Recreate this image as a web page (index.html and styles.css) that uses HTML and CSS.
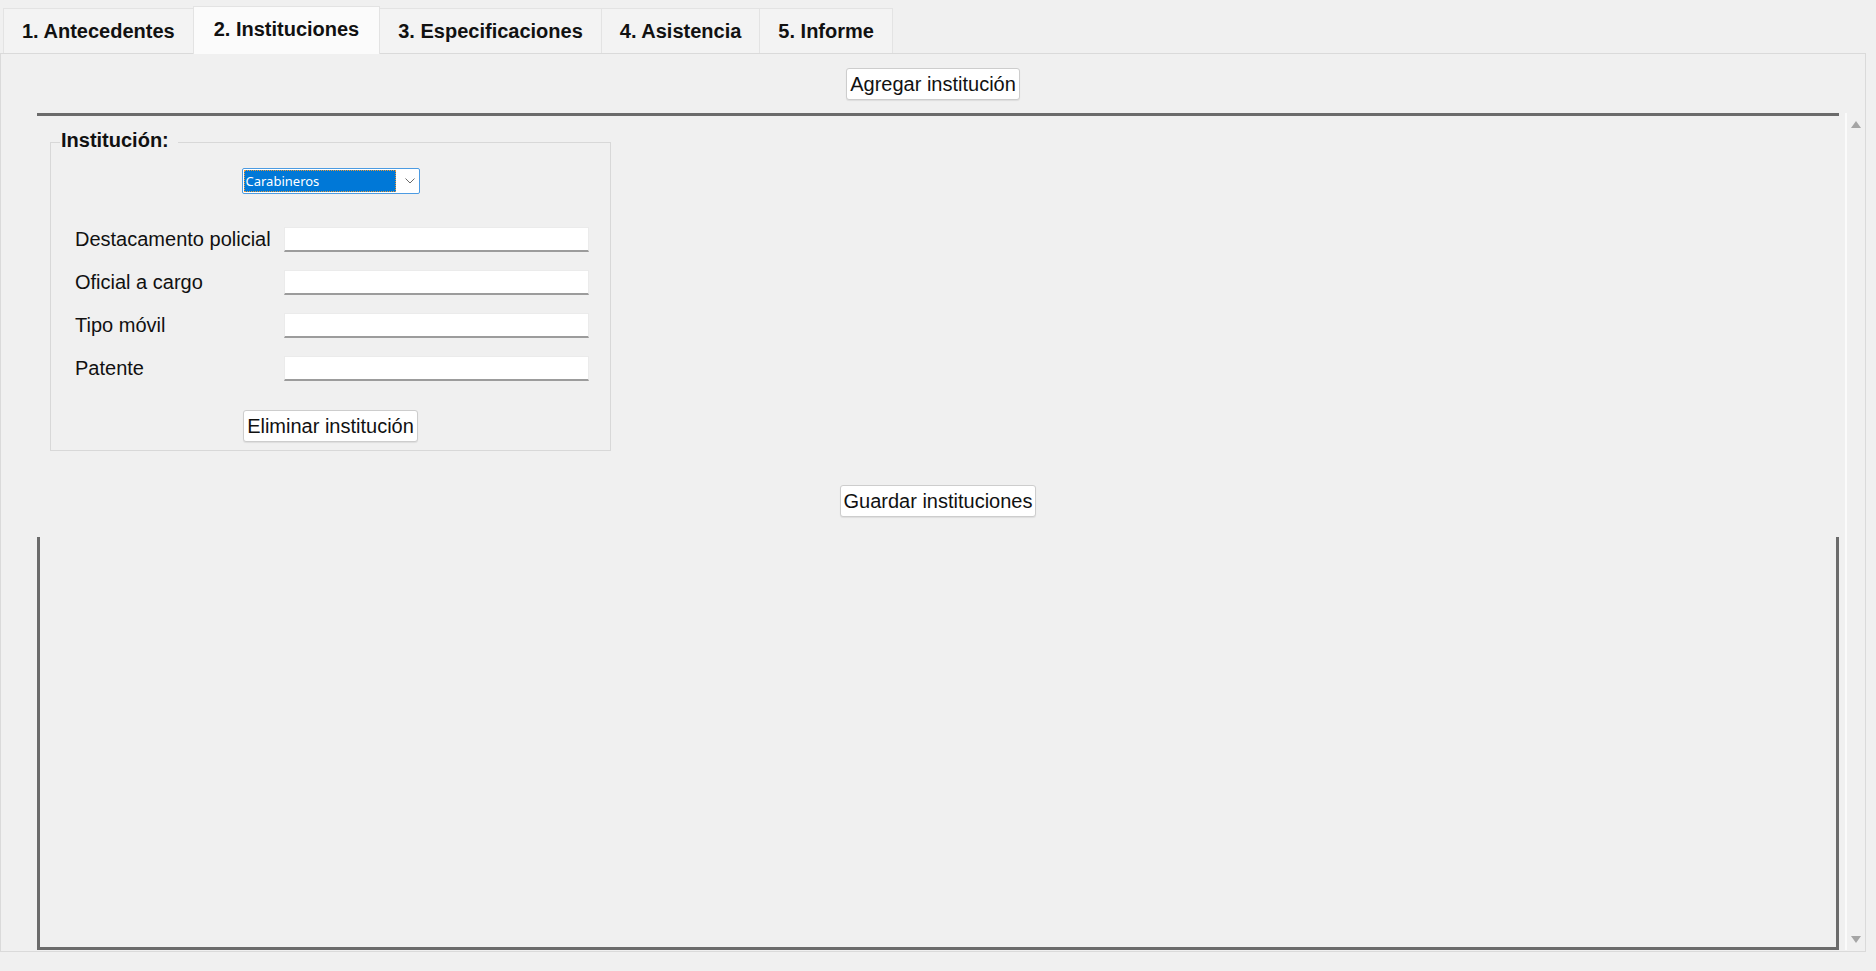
FILE: index.html
```html
<!DOCTYPE html>
<html>
<head>
	<meta charset="UTF-8">
	<title>Instituciones</title>

	<link rel="stylesheet" href="styles.css">
</head>

<body>
	<div id="tabs">
		<div class="tab">1. Antecedentes</div>
		<div class="tab active">2. Instituciones</div>
		<div class="tab">3. Especificaciones</div>
		<div class="tab">4. Asistencia</div>
		<div class="tab">5. Informe</div>
	</div>

	<div id="panel">
		<div class="top_row">
			<button class="btn" type="button">Agregar institución</button>
		</div>

		<div id="scroll_pane">
			<div id="viewport">
				<div id="content">
					<fieldset class="institucion">
						<legend>Institución:</legend>
						<div class="combo_row">
							<div class="combo">
								<span class="combo_value">Carabineros</span>
								<svg class="chevron" width="10" height="6" viewBox="0 0 10 6"><path d="M0.5 0.5 L5 5 L9.5 0.5" fill="none" stroke="#6a6a6a" stroke-width="1"/></svg>
							</div>
						</div>
						<div class="form_grid">
							<label>Destacamento policial</label><input type="text">
							<label>Oficial a cargo</label><input type="text">
							<label>Tipo móvil</label><input type="text">
							<label>Patente</label><input type="text">
						</div>
						<div class="btn_row remove">
							<button class="btn" type="button">Eliminar institución</button>
						</div>
					</fieldset>
					<div class="btn_row save">
						<button class="btn" type="button">Guardar instituciones</button>
					</div>
				</div>
				<div id="empty_area"></div>
			</div>
			<div id="scrollbar">
				<span class="arrow up"></span>
				<span class="arrow down"></span>
			</div>
		</div>
	</div>
</body>

</html>
```

FILE: styles.css
```css
body {
	margin:0;
	height:971px;
	overflow:hidden;
	background-color:#f0f0f0;
	font-family:"Liberation Sans", Arial, sans-serif;
	font-size:20px;
	color:#111;
}

/* tab strip */
#tabs {
	display:flex;
	align-items:flex-end;
	height:53px;
	padding-left:3px;
	box-sizing:border-box;
}
.tab {
	height:45px;
	box-sizing:border-box;
	padding:0 18px;
	margin-right:-1px;
	border:1px solid #e3e3e3;
	border-bottom:none;
	background-color:#f3f3f3;
	font-weight:bold;
	line-height:44px;
	white-space:nowrap;
}
.tab.active {
	position:relative;
	z-index:1;
	height:48px;
	margin-bottom:-1px;
	padding:0 20px;
	background-color:#fbfbfb;
	line-height:45px;
}

/* main panel */
#panel {
	width:1866px;
	height:899px;
	box-sizing:border-box;
	border:1px solid #dadada;
	padding-top:14px;
}
.top_row {
	display:flex;
	justify-content:center;
}
.btn {
	height:32px;
	padding:0 3px;
	border:1px solid #cdcdcd;
	border-radius:3px;
	background-color:#fff;
	box-shadow:0 1px 1px rgba(0,0,0,0.08);
	font-family:"Liberation Sans", Arial, sans-serif;
	font-size:20px;
	color:#111;
	line-height:30px;
}

/* scroll pane */
#scroll_pane {
	display:flex;
	height:837px;
	margin:13px 0 0 36px;
}
#viewport {
	flex:1;
	display:flex;
	flex-direction:column;
	border-top:3px solid #6b6b6b;
}
#content {
	height:421px;
}
#empty_area {
	flex:1;
	border:3px solid #6b6b6b;
	border-top:none;
}
#scrollbar {
	width:20px;
	margin-left:6px;
	border-left:2px solid #fbfbfb;
	display:flex;
	flex-direction:column;
	justify-content:space-between;
	align-items:center;
	padding:8px 0 7px;
	box-sizing:border-box;
}
.arrow {
	width:0;
	height:0;
	border-left:5px solid transparent;
	border-right:5px solid transparent;
}
.arrow.up {
	border-bottom:7px solid #a5a5a5;
}
.arrow.down {
	border-top:7px solid #a5a5a5;
}

/* institution group */
.institucion {
	width:561px;
	box-sizing:border-box;
	margin:13px 0 0 13px;
	padding:13px 21px 8px 24px;
	border:1px solid #d8d8d8;
}
.institucion legend {
	margin-left:-15px;
	padding:0 9px 4px 1px;
	font-weight:bold;
	line-height:22px;
}
.combo_row {
	display:flex;
	justify-content:center;
	margin-left:-3px;
}
.combo {
	display:flex;
	align-items:center;
	width:178px;
	height:26px;
	box-sizing:border-box;
	padding:1px;
	border:1px solid #4c9be2;
	border-radius:2px;
	background-color:#fff;
}
.combo_value {
	width:150px;
	height:22px;
	background-color:#0078d7;
	outline:1px dotted #e89a3c;
	outline-offset:-1px;
	color:#fff;
	font-family:"Noto Sans", sans-serif;
	font-size:13px;
	line-height:22px;
	padding-left:2px;
}
.chevron {
	margin-left:9px;
}
.form_grid {
	display:grid;
	grid-template-columns:209px 305px;
	row-gap:18px;
	align-items:center;
	margin-top:33px;
}
.form_grid label {
	white-space:nowrap;
}
.form_grid input {
	height:25px;
	width:305px;
	box-sizing:border-box;
	margin:0;
	border:1px solid #ebebeb;
	border-bottom:2px solid #9c9c9c;
	background-color:#fff;
}
.btn_row {
	display:flex;
	justify-content:center;
}
.btn_row.remove {
	margin-top:29px;
	margin-left:-3px;
}
.btn_row.save {
	margin-top:34px;
}
```
